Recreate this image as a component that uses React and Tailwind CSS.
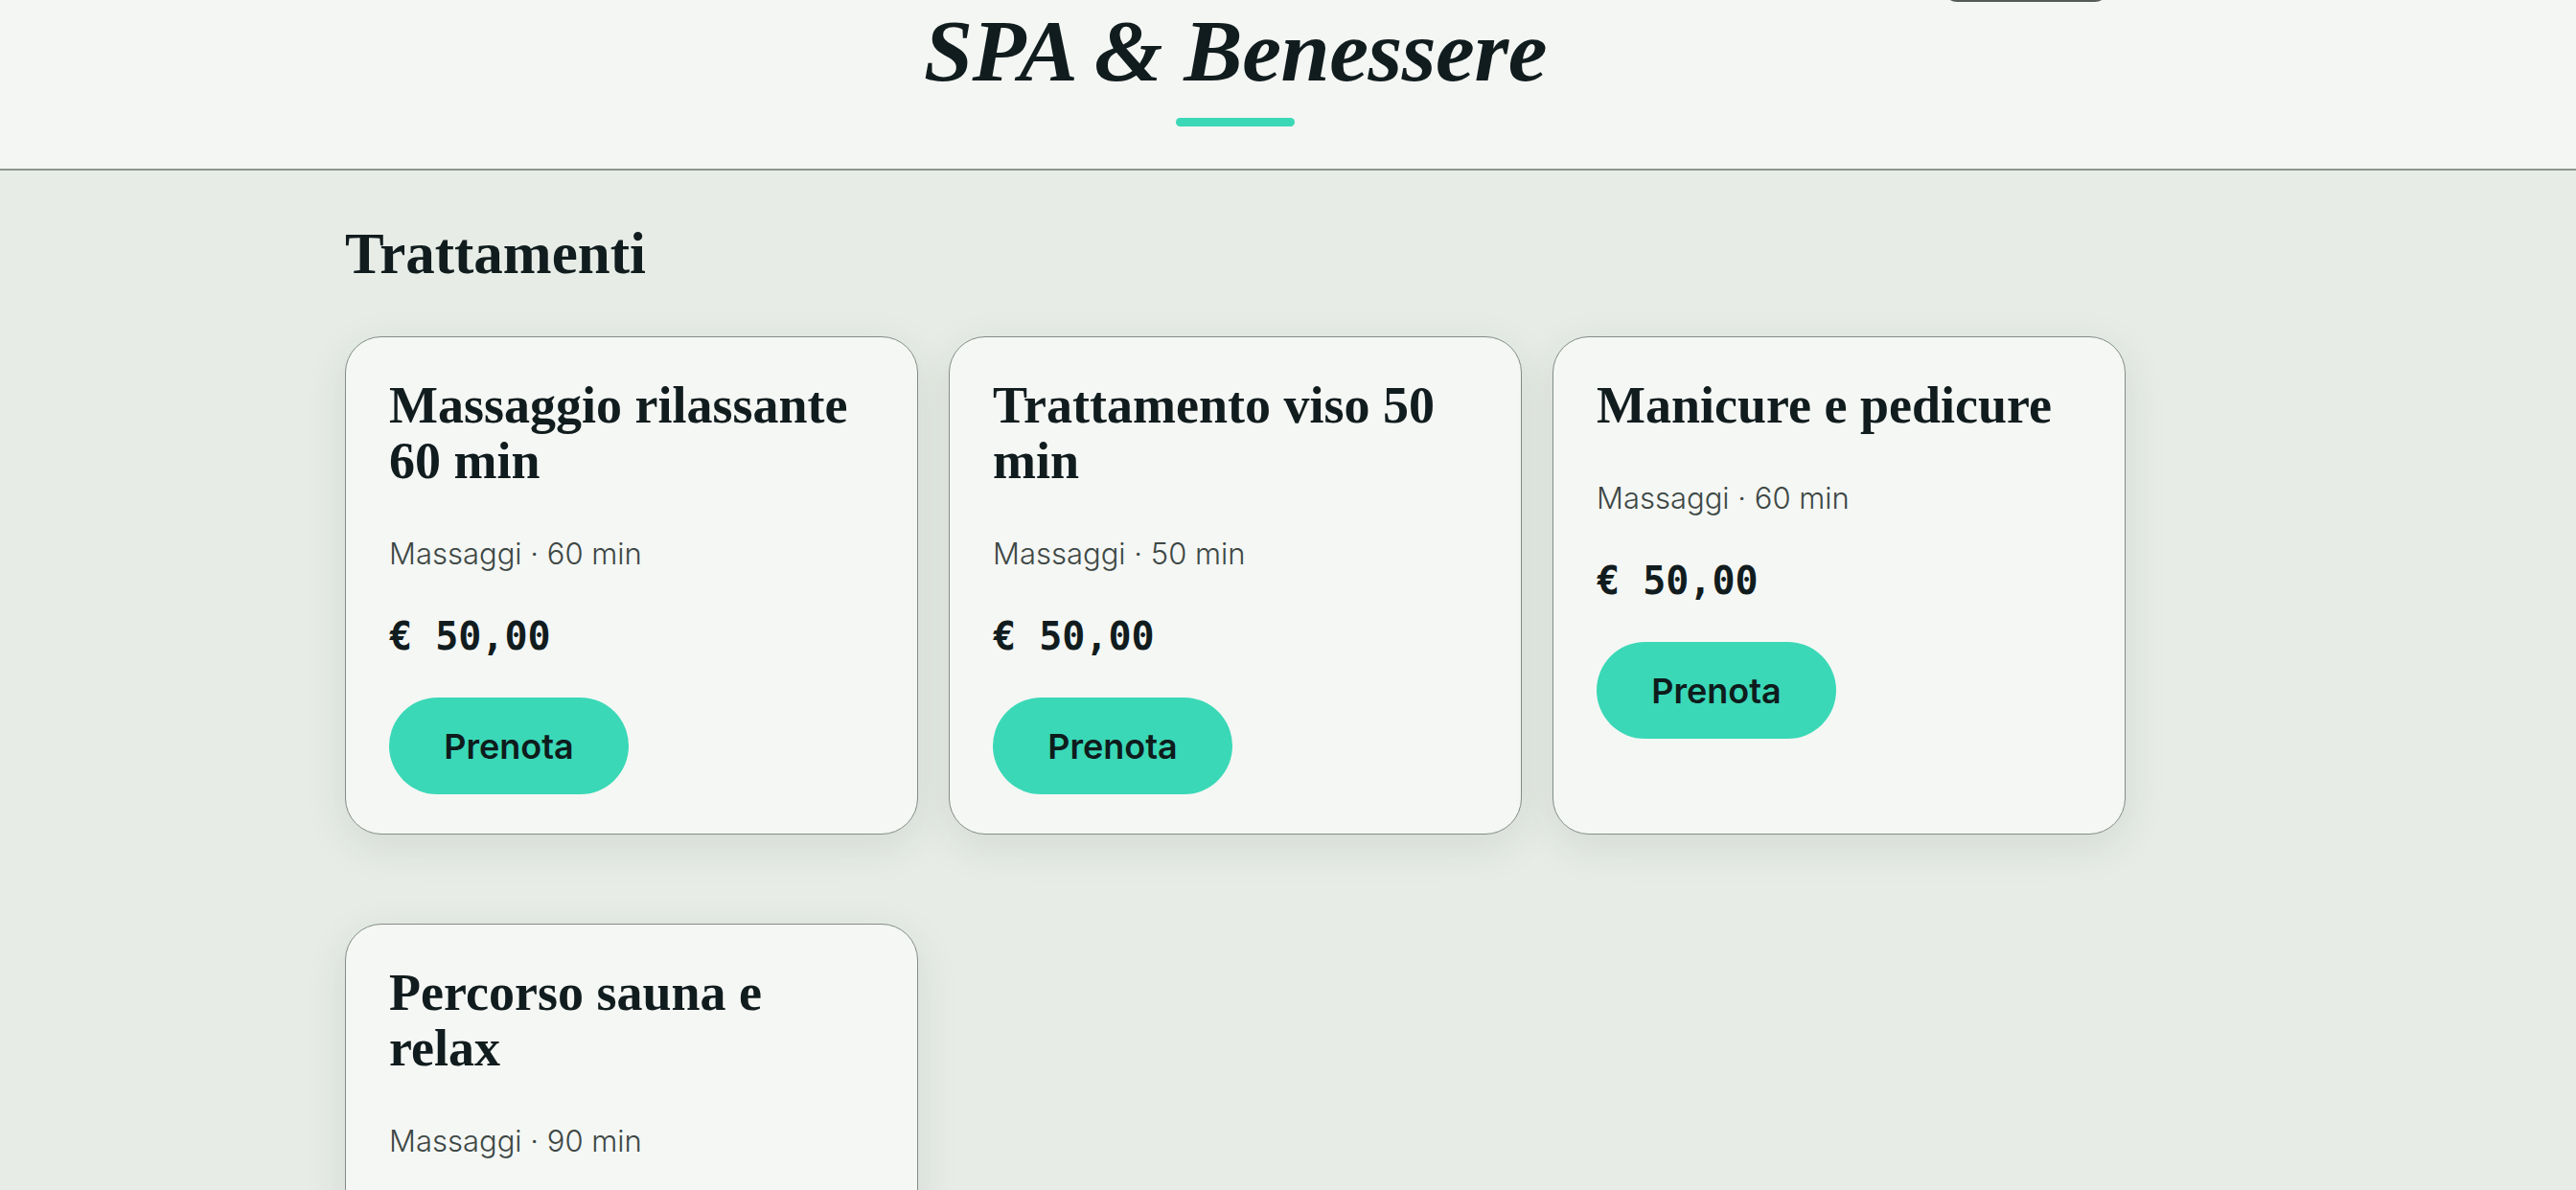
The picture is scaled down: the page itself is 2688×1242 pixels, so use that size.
import React from "react";

const treatments = [
  { name: "Massaggio rilassante 60 min", category: "Massaggi", minutes: 60, price: "€ 50,00" },
  { name: "Trattamento viso 50 min", category: "Massaggi", minutes: 50, price: "€ 50,00" },
  { name: "Manicure e pedicure", category: "Massaggi", minutes: 60, price: "€ 50,00" },
  { name: "Percorso sauna e relax", category: "Massaggi", minutes: 90, price: "€ 50,00" },
];

const serif = "font-['Liberation_Serif',serif]";
const sans = "font-['Inter',sans-serif]";

const TreatmentCard = ({ item }) => (
  <div className="flex flex-col items-start rounded-[38px] border-[1.5px] border-[#838d88] bg-[#f5f7f4] px-[45px] pt-[42px] pb-[41px] shadow-[0_12px_44px_rgba(40,60,50,0.10)]">
    <h3 className={`${serif} text-[54px] leading-[58px] font-bold text-[#111c1e]`}>
      {item.name}
    </h3>
    <p className={`${sans} mt-[46px] text-[31px] leading-[44px] font-light text-[#3e4846]`}>
      {item.category} · {item.minutes} min
    </p>
    <p className="mt-[40px] font-['DejaVu_Sans_Mono',monospace] text-[40px] leading-[48px] font-bold text-[#111c1e]">
      {item.price}
    </p>
    <button
      className={`${sans} mt-[40px] h-[101px] w-[250px] rounded-full bg-[#3ad8b7] text-[36px] font-semibold text-[#0e1c1c]`}
    >
      Prenota
    </button>
  </div>
);

export default function App() {
  return (
    <div className="min-h-screen overflow-hidden bg-[#e7ece6]">
      {/* Header */}
      <header className="border-b-2 border-[#8f9690] bg-[#f4f6f3] pt-[8px] pb-[44px]">
        <div className="flex h-0 justify-end pr-[488px]">
          <span className="-mt-[68px] h-[62px] w-[172px] rounded-[14px] border-2 border-[#555b58] bg-[#f4f6f3]" />
        </div>
        <div className="flex flex-col items-center pr-[110px]">
          <h1 className={`${serif} text-[92px] leading-[90px] font-bold italic tracking-[-0.5px] text-[#111c1e]`}>
            SPA &amp; Benessere
          </h1>
          <span className="mt-[25px] h-[9px] w-[124px] rounded-full bg-[#3ad8b7]" />
        </div>
      </header>

      {/* Treatments */}
      <main className="px-[360px] pt-[51px] pb-[80px]">
        <h2 className={`${serif} text-[61px] leading-[72px] font-bold text-[#111c1e]`}>
          Trattamenti
        </h2>
        <div className="mt-[50px] grid grid-cols-[repeat(3,598px)] gap-x-[32px] gap-y-[93px]">
          {treatments.map((t) => (
            <TreatmentCard key={t.name} item={t} />
          ))}
        </div>
      </main>
    </div>
  );
}
